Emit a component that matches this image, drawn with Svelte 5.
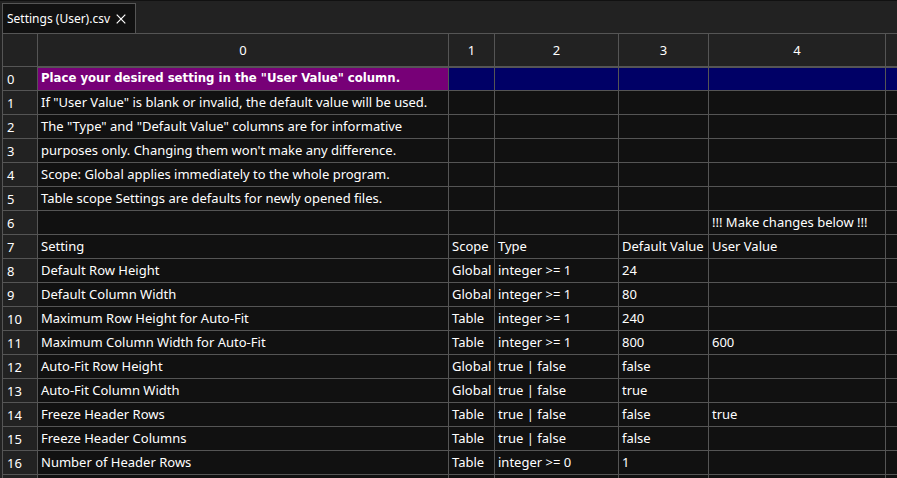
<script>

let tabs = [{ id: 1, name: "Settings (User).csv" }];

const columns = [0, 1, 2, 3, 4, ""];

const rows = [
    ["Place your desired setting in the \"User Value\" column."],
    ["If \"User Value\" is blank or invalid, the default value will be used."],
    ["The \"Type\" and \"Default Value\" columns are for informative"],
    ["purposes only. Changing them won't make any difference."],
    ["Scope: Global applies immediately to the whole program."],
    ["Table scope Settings are defaults for newly opened files."],
    ["", "", "", "", "!!! Make changes below !!!"],
    ["Setting", "Scope", "Type", "Default Value", "User Value"],
    ["Default Row Height", "Global", "integer >= 1", "24"],
    ["Default Column Width", "Global", "integer >= 1", "80"],
    ["Maximum Row Height for Auto-Fit", "Table", "integer >= 1", "240"],
    ["Maximum Column Width for Auto-Fit", "Table", "integer >= 1", "800", "600"],
    ["Auto-Fit Row Height", "Global", "true | false", "false"],
    ["Auto-Fit Column Width", "Global", "true | false", "true"],
    ["Freeze Header Rows", "Table", "true | false", "false", "true"],
    ["Freeze Header Columns", "Table", "true | false", "false"],
    ["Number of Header Rows", "Table", "integer >= 0", "1"],
    [],
];

let cursor = { row: 0, col: 0 };

function closeTab(id){
    tabs = tabs.filter(tab => tab.id !== id);
}

function moveCursor(row, col){
    cursor = { row, col };
}

</script>

<div class="window">
    <div class="tabs">
        {#each tabs as tab (tab.id)}
            <div class="tab">
                <button class="name">{tab.name}</button>
                <button class="close" aria-label="Close {tab.name}" on:click={() => closeTab(tab.id)}>
                    <svg width="10" height="10" viewBox="0 0 10 10">
                        <path d="M0.7 0.7L9.3 9.3M9.3 0.7L0.7 9.3" stroke="#fff" stroke-width="1.2" fill="none" />
                    </svg>
                </button>
            </div>
        {/each}
    </div>

    <table>
        <colgroup>
            <col class="numbers">
            <col class="setting">
            <col class="scope">
            <col class="type">
            <col class="default">
            <col class="user">
            <col>
        </colgroup>
        <thead>
            <tr>
                <th></th>
                {#each columns as column}
                    <th scope="col">{column}</th>
                {/each}
            </tr>
        </thead>
        <tbody>
            {#each rows as row, r}
                <tr class:current={r === cursor.row}>
                    <th scope="row">{r < rows.length - 1 ? r : ""}</th>
                    {#each columns as _, c}
                        <!-- svelte-ignore a11y_click_events_have_key_events, a11y_no_noninteractive_element_interactions -->
                        <td class:cursor={r === cursor.row && c === cursor.col} on:click={() => moveCursor(r, c)}>{row[c] ?? ""}</td>
                    {/each}
                </tr>
            {/each}
        </tbody>
    </table>
</div>

<style>
:global(body) {
    background-color: #222;
    overflow: hidden;
}

.window {
    box-sizing: border-box;
    height: 100vh;
    overflow: hidden;
    padding-left: 2px;
    border-top: 1px solid #111;
    color: #fff;
    background-color: #222;
    font-family: "Noto Sans", sans-serif;
    font-size: 13px;
}

.tabs {
    display: flex;
    padding-top: 2px;
}

.tab {
    display: flex;
    align-items: center;
    gap: 6px;
    height: 29px;
    padding: 0 9px 0 4px;
    border: 1px solid #555;
    border-bottom: none;
    background-color: #111;
}

button {
    padding: 0;
    border: none;
    color: inherit;
    background: none;
    font-family: inherit;
    font-size: 12px;
}

.close {
    display: flex;
}

table {
    width: 100%;
    table-layout: fixed;
    border-collapse: separate;
    border-spacing: 0;
    border-top: 1px solid #555;
    border-left: 1px solid #555;
}

.numbers { width: 35px; }
.setting { width: 411px; }
.scope { width: 46px; }
.type { width: 124px; }
.default { width: 90px; }
.user { width: 177px; }

th, td {
    box-sizing: border-box;
    height: 24px;
    padding: 0 0 0 3px;
    border-right: 1px solid #555;
    border-bottom: 1px solid #555;
    font-weight: normal;
    line-height: 20px;
    text-align: left;
    white-space: nowrap;
}

th {
    padding-left: 4px;
    background-color: #222;
}

thead th {
    height: 33px;
    padding: 0;
    text-align: center;
}

td {
    padding-bottom: 2px;
    background-color: #111;
}

th:last-child, td:last-child {
    border-right: none;
}

tbody tr:first-child td {
    border-top: 1px solid #555;
}

.current td {
    background-color: #006;
}

.current .cursor {
    background-color: #707;
    font-family: "DejaVu Sans Condensed", "Noto Sans", sans-serif;
    font-weight: bold;
}
</style>
